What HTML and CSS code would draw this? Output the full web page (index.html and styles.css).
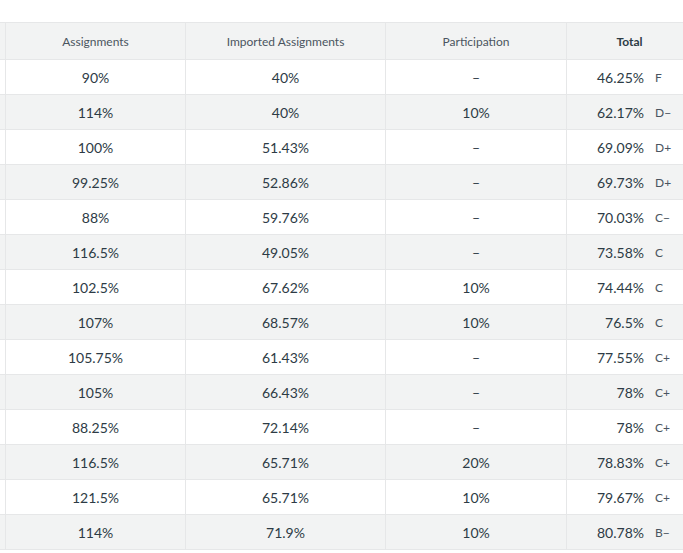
FILE: index.html
```html
<!DOCTYPE html>
<html>
<head>
<meta charset="utf-8">
<link rel="stylesheet" href="styles.css">
</head>
<body>
<div class="grid">
  <div class="cell head edge"></div>
  <div class="cell head">Assignments</div>
  <div class="cell head">Imported Assignments</div>
  <div class="cell head">Participation</div>
  <div class="cell head total-head">Total</div>

  <div class="cell edge"></div><div class="cell">90%</div><div class="cell">40%</div><div class="cell">–</div><div class="cell total"><span class="pct">46.25%</span><span class="grade">F</span></div>
  <div class="cell edge alt"></div><div class="cell alt">114%</div><div class="cell alt">40%</div><div class="cell alt">10%</div><div class="cell total alt"><span class="pct">62.17%</span><span class="grade">D−</span></div>
  <div class="cell edge"></div><div class="cell">100%</div><div class="cell">51.43%</div><div class="cell">–</div><div class="cell total"><span class="pct">69.09%</span><span class="grade">D+</span></div>
  <div class="cell edge alt"></div><div class="cell alt">99.25%</div><div class="cell alt">52.86%</div><div class="cell alt">–</div><div class="cell total alt"><span class="pct">69.73%</span><span class="grade">D+</span></div>
  <div class="cell edge"></div><div class="cell">88%</div><div class="cell">59.76%</div><div class="cell">–</div><div class="cell total"><span class="pct">70.03%</span><span class="grade">C−</span></div>
  <div class="cell edge alt"></div><div class="cell alt">116.5%</div><div class="cell alt">49.05%</div><div class="cell alt">–</div><div class="cell total alt"><span class="pct">73.58%</span><span class="grade">C</span></div>
  <div class="cell edge"></div><div class="cell">102.5%</div><div class="cell">67.62%</div><div class="cell">10%</div><div class="cell total"><span class="pct">74.44%</span><span class="grade">C</span></div>
  <div class="cell edge alt"></div><div class="cell alt">107%</div><div class="cell alt">68.57%</div><div class="cell alt">10%</div><div class="cell total alt"><span class="pct">76.5%</span><span class="grade">C</span></div>
  <div class="cell edge"></div><div class="cell">105.75%</div><div class="cell">61.43%</div><div class="cell">–</div><div class="cell total"><span class="pct">77.55%</span><span class="grade">C+</span></div>
  <div class="cell edge alt"></div><div class="cell alt">105%</div><div class="cell alt">66.43%</div><div class="cell alt">–</div><div class="cell total alt"><span class="pct">78%</span><span class="grade">C+</span></div>
  <div class="cell edge"></div><div class="cell">88.25%</div><div class="cell">72.14%</div><div class="cell">–</div><div class="cell total"><span class="pct">78%</span><span class="grade">C+</span></div>
  <div class="cell edge alt"></div><div class="cell alt">116.5%</div><div class="cell alt">65.71%</div><div class="cell alt">20%</div><div class="cell total alt"><span class="pct">78.83%</span><span class="grade">C+</span></div>
  <div class="cell edge"></div><div class="cell">121.5%</div><div class="cell">65.71%</div><div class="cell">10%</div><div class="cell total"><span class="pct">79.67%</span><span class="grade">C+</span></div>
  <div class="cell edge alt"></div><div class="cell alt">114%</div><div class="cell alt">71.9%</div><div class="cell alt">10%</div><div class="cell total alt"><span class="pct">80.78%</span><span class="grade">B−</span></div>
</div>
</body>
</html>
```
FILE: styles.css
```css
html, body {
  margin: 0;
  padding: 0;
  background: #fff;
  overflow: hidden;
}
body {
  font-family: Lato, "Open Sans", sans-serif;
  color: #2d3b45;
  width: 683px;
  height: 553px;
}
.grid {
  margin-top: 22px;
  display: grid;
  grid-template-columns: 6px 180px 200px 181px 126px;
  grid-template-rows: 37px;
  grid-auto-rows: 35px;
  width: 693px;
  height: 531px;
  border-top: 1px solid #e6e7e8;
}
.cell {
  box-sizing: border-box;
  border-right: 1px solid #e6e7e8;
  border-bottom: 1px solid #e6e7e8;
  display: flex;
  align-items: center;
  justify-content: center;
  font-size: 14px;
  white-space: nowrap;
}
.head {
  background: #f2f3f3;
  font-size: 12px;
  color: #4a5560;
}
.total-head {
  font-weight: 700;
  color: #2d3b45;
}
.alt {
  background: #f2f3f3;
}
.total {
  justify-content: flex-end;
  padding-right: 6px;
}
.grade {
  width: 31px;
  margin-left: 11px;
  font-size: 12px;
  color: #4a5560;
}
```
